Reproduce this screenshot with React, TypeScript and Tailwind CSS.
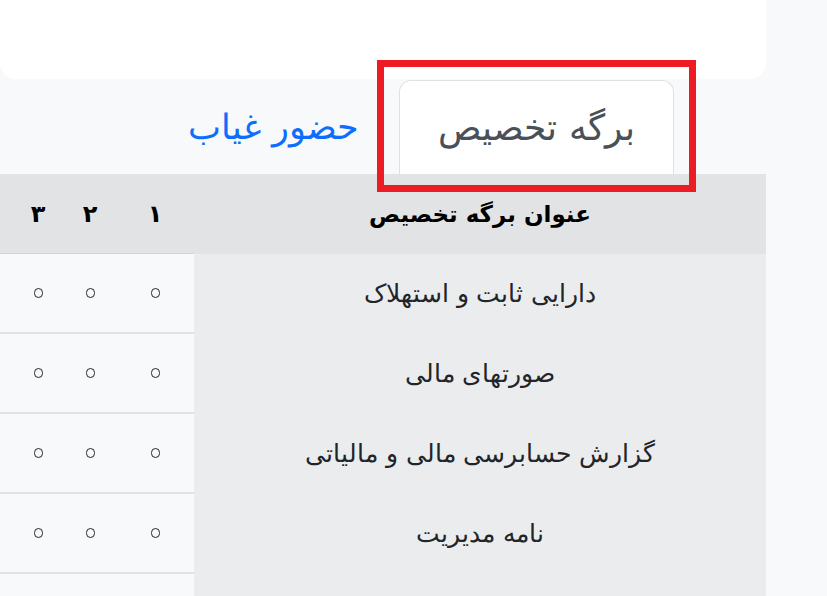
const rows = [
  "دارایی ثابت و استهلاک",
  "صورتهای مالی",
  "گزارش حسابرسی مالی و مالیاتی",
  "نامه مدیریت",
  "",
];

// Persian zero, drawn as a small ring the way the original font shows it
function Zero() {
  return (
    <span className="inline-flex items-center justify-center w-[9px] h-[10px] rounded-full border-[1.5px] border-[#212529] text-[8px] leading-none text-transparent">
      ۰
    </span>
  );
}

export default function App() {
  return (
    <div
      dir="rtl"
      className="relative w-[827px] h-[596px] overflow-hidden bg-[#f8f9fa] flex"
      style={{ fontFamily: '"DejaVu Sans", sans-serif' }}
    >
      <div className="w-[61px] shrink-0" />
      <div className="w-[766px] shrink-0 flex flex-col">
        {/* top card */}
        <div className="h-[79px] shrink-0 bg-white rounded-b-2xl" />

        {/* tabs */}
        <div className="h-[95px] shrink-0 flex items-end pr-[92px]">
          <div className="w-[275px] h-[94px] bg-white border border-b-0 border-[#dee2e6] rounded-t-xl flex items-center justify-center text-[36px] font-light text-[#495057]">
            برگه تخصیص
          </div>
          <div className="h-[94px] flex items-center pr-[40px] text-[35px] font-light text-[#0d6efd]">
            حضور غیاب
          </div>
        </div>

        {/* table */}
        <div className="shrink-0 flex flex-col">
          <div className="h-[80px] flex bg-[#e2e3e5] font-bold text-black">
            <div className="w-[572px] shrink-0 flex items-center justify-center text-[23px]">
              عنوان برگه تخصیص
            </div>
            <div className="w-[78px] shrink-0 flex items-center justify-center text-[24px] border-b border-[#ced4da]">
              ۱
            </div>
            <div className="w-[52px] shrink-0 flex items-center justify-center text-[24px] border-b border-[#ced4da]">
              ۲
            </div>
            <div className="w-[52px] shrink-0 flex items-center justify-center text-[24px] border-b border-[#ced4da]">
              ۳
            </div>
            <div className="flex-1 border-b border-[#ced4da]" />
          </div>
          {rows.map((title, i) => (
            <div key={i} className="h-[80px] shrink-0 flex text-[#212529]">
              <div className="w-[572px] shrink-0 bg-[#ebeced] flex items-center justify-center text-[25px] font-light">
                {title}
              </div>
              <div className="flex-1 flex bg-[#f8f9fa] border-b-2 border-[#dee2e6]">
                {title && (
                  <>
                    <div className="w-[78px] flex items-center justify-center"><Zero /></div>
                    <div className="w-[52px] flex items-center justify-center"><Zero /></div>
                    <div className="w-[52px] flex items-center justify-center"><Zero /></div>
                  </>
                )}
              </div>
            </div>
          ))}
        </div>
      </div>

      {/* annotation box */}
      <div className="absolute left-[377px] top-[60px] w-[319px] h-[132px] border-[7px] border-[#ed1c24]" />
    </div>
  );
}
